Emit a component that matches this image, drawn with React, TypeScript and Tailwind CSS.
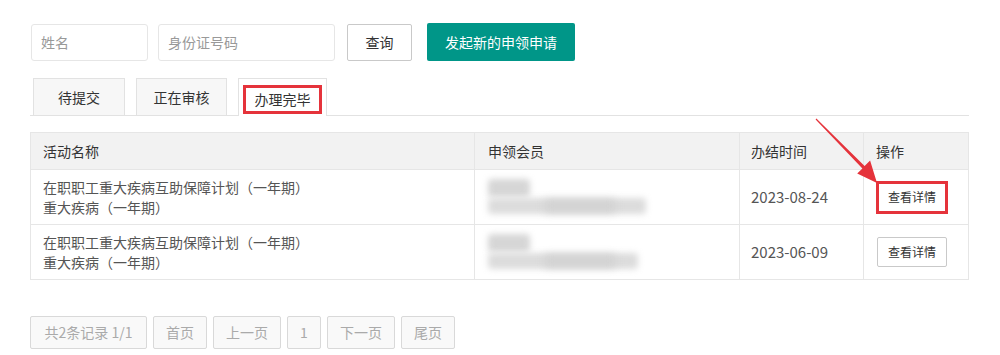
import React from 'react';

const ROWS = [
  { name: ['在职职工重大疾病互助保障计划（一年期）', '重大疾病（一年期）'], date: '2023-08-24', marked: true, blur: 'a' },
  { name: ['在职职工重大疾病互助保障计划（一年期）', '重大疾病（一年期）'], date: '2023-06-09', marked: false, blur: 'b' },
];

const PAGER = [
  { label: '共2条记录 1/1', w: 'w-[117px]' },
  { label: '首页', w: 'w-[54px]' },
  { label: '上一页', w: 'w-[68px]' },
  { label: '1', w: 'w-[34px]' },
  { label: '下一页', w: 'w-[68px]' },
  { label: '尾页', w: 'w-[54px]' },
];

// blurred-out member name (privacy smudge in the screenshot)
function Smudge({ short }: { short?: boolean }) {
  return (
    <div className="relative h-[42px] w-[165px]">
      <div className="absolute left-[3px] top-[3px] h-[18px] w-[42px] rounded-sm bg-[#d6d6d6] blur-[3px]" />
      <div className={`absolute left-[3px] top-[22px] h-[16px] rounded-sm bg-[#dcdcdc] blur-[3px] ${short ? 'w-[150px]' : 'w-[158px]'}`} />
      <div className="absolute left-[60px] top-[24px] h-[12px] w-[70px] bg-[#d2d2d2] blur-[4px]" />
    </div>
  );
}

export default function App() {
  return (
    <div className="relative w-[1000px] h-[355px] bg-white font-['Noto_Sans_CJK_SC','Microsoft_YaHei',sans-serif] text-[#333]">
      <div className="pl-[31px] pt-[23px] w-[969px]">
        {/* search bar */}
        <div className="flex items-center">
          <div className="h-[37px] w-[117px] border border-[#e6e6e6] rounded-[3px] flex items-center pl-[9px] text-[14px] text-[#999]">姓名</div>
          <div className="ml-[10px] h-[37px] w-[177px] border border-[#e6e6e6] rounded-[3px] flex items-center pl-[9px] text-[14px] text-[#999]">身份证号码</div>
          <button className="ml-[12px] h-[37px] w-[65px] border border-[#c9c9c9] rounded-[2px] bg-white text-[14px] text-[#333]">查询</button>
          <button className="ml-[15px] h-[38px] w-[148px] rounded-[2px] bg-[#009688] text-[14px] text-white">发起新的申领申请</button>
        </div>

        {/* tabs */}
        <div className="mt-[18px] -ml-[1px] flex items-end border-b border-[#e2e2e2] pl-[3px] h-[37px]">
          <div className="h-[37px] w-[92px] border border-b-0 border-[#e2e2e2] bg-[#f7f7f7] flex items-center justify-center text-[14px]">待提交</div>
          <div className="ml-[11px] h-[37px] w-[91px] border border-b-0 border-[#e2e2e2] bg-[#f7f7f7] flex items-center justify-center text-[14px]">正在审核</div>
          <div className="ml-[11px] h-[38px] -mb-px w-[89px] border border-b-0 border-[#e2e2e2] bg-white flex items-center justify-center text-[14px]">
            <span className="mt-[4px] h-[29px] w-[79px] border-[3px] border-[#e5333b] flex items-center justify-center">办理完毕</span>
          </div>
        </div>

        {/* table */}
        <table className="mt-[16px] -ml-[1px] w-[938px] table-fixed border-collapse text-[14px]">
          <colgroup>
            <col className="w-[444px]" />
            <col className="w-[265px]" />
            <col className="w-[124px]" />
            <col className="w-[105px]" />
          </colgroup>
          <thead>
            <tr className="h-[37px] bg-[#f2f2f2]">
              <th className="border border-[#e6e6e6] pl-[12px] text-left font-normal">活动名称</th>
              <th className="border border-[#e6e6e6] pl-[13px] text-left font-normal">申领会员</th>
              <th className="border border-[#e6e6e6] pl-[11px] text-left font-normal">办结时间</th>
              <th className="border border-[#e6e6e6] pl-[12px] text-left font-normal">操作</th>
            </tr>
          </thead>
          <tbody>
            {ROWS.map((r, i) => (
              <tr key={i} className="h-[55px]">
                <td className="border border-[#e6e6e6] pl-[12px] leading-[20px] text-[#555]">
                  <div>{r.name[0]}</div>
                  <div>{r.name[1]}</div>
                </td>
                <td className="border border-[#e6e6e6] pl-[10px]">
                  <Smudge short={r.blur === 'b'} />
                </td>
                <td className="border border-[#e6e6e6] pl-[11px] text-[15px] text-[#555]">{r.date}</td>
                <td className="border border-[#e6e6e6] pl-[13px]">
                  <div className="relative w-[70px]">
                    <button className="h-[30px] w-[70px] border border-[#c9c9c9] rounded-[2px] bg-white text-[12px] text-[#333]">查看详情</button>
                    {r.marked && <div className="absolute -left-[1px] -top-[1px] h-[33px] w-[72px] border-[3px] border-[#e5333b]" />}
                  </div>
                </td>
              </tr>
            ))}
          </tbody>
        </table>

        {/* pager */}
        <div className="mt-[36px] -ml-[1px] flex gap-[6px]">
          {PAGER.map(p => (
            <div key={p.label} className={`${p.w} h-[33px] border border-[#d9d9d9] rounded-[2px] bg-[#f9f9f9] flex items-center justify-center text-[14px] text-[#aaa]`}>
              {p.label}
            </div>
          ))}
        </div>
      </div>

      {/* annotation arrow */}
      <svg className="absolute left-0 top-0 pointer-events-none" width="1000" height="355">
        <polygon points="815.6,119.4 816.4,118.6 864.6,165.9 870.1,160.6 877,183 857.2,173.4 862.4,168.4" fill="#e5333b" />
      </svg>
    </div>
  );
}
